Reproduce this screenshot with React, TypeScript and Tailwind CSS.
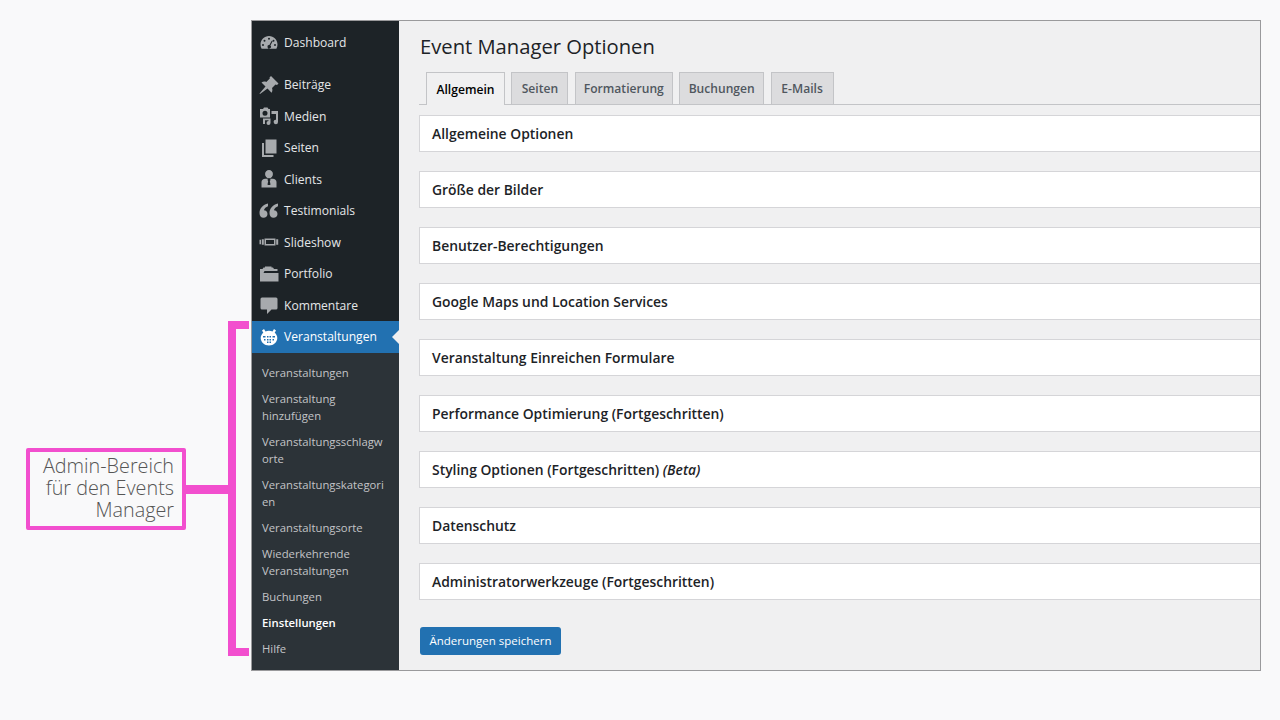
import type { ReactNode } from "react";

const Icon = ({ children, className = "text-[#a7aaad]" }: { children: ReactNode; className?: string }) => (
  <svg viewBox="0 0 20 20" fill="currentColor" className={`w-[20px] h-[20px] shrink-0 ${className}`}>
    {children}
  </svg>
);

const icons: Record<string, ReactNode> = {
  dashboard: (
    <path
      fillRule="evenodd"
      d="M10 3C5.300 3 1.500 6.800 1.500 11.500c0 1.600.4 3 1.100 4.300h14.800c.7-1.300 1.100-2.700 1.100-4.300C18.500 6.800 14.700 3 10 3zM10 4.700a1 1 0 1 1 0 2 1 1 0 0 1 0-2zM5.500 6.700a1 1 0 1 1 0 2 1 1 0 0 1 0-2zm9 0a1 1 0 1 1 0 2 1 1 0 0 1 0-2zM4 11a1 1 0 1 1 0 2 1 1 0 0 1 0-2zm12 0a1 1 0 1 1 0 2 1 1 0 0 1 0-2zm-3.300-3.200.9.500-2.200 4.300a1.700 1.700 0 1 1-1-.5z"
    />
  ),
  pin: (
    <path d="M12 1 19.500 8.500 18 10 16.500 9.500 13 13c.7 1.700.5 3.300-.5 4.800L8.500 13.500 1 19l-.5-.5L6.500 11.500 2.500 7.500c1.500-1 3.200-1.200 4.800-.5L10.800 3.500 10.500 2.500z" />
  ),
  media: (
    <path
      fillRule="evenodd"
      d="M1 3h3l1-1.500h3.500L9.500 3H11v8.500H1zm5 1.800a2.500 2.500 0 1 0 0 5 2.500 2.500 0 0 0 0-5zM12.500 5H19v11a2.200 2.200 0 1 1-2-2.200V8h-4.500zM4 12.500h7.500V17a2 2 0 1 1-2-2v-.8H6V18H4z"
    />
  ),
  pages: (
    <path d="M6.500 1.500h11v14h-11zM3 5h2v12h9.500v2H3z" />
  ),
  client: (
    <path
      fillRule="evenodd"
      d="M10 1a3.900 3.900 0 0 1 3.900 4.100A3.900 3.900 0 0 1 10 9.300a3.900 3.900 0 0 1-3.900-4.200A3.900 3.900 0 0 1 10 1zM2.500 18.500v-5.500c0-2 1.600-3.300 3.700-3.300H9l-.6 1.300.8 1-.7 3.500.5 .5h2l.5-.5-.7-3.500.8-1L11 9.700h2.800c2.100 0 3.700 1.300 3.700 3.300v5.500z"
    />
  ),
  quote: (
    <g>
      <path d="M9 2.500C4 3.500.5 7.500.5 12c0 3 1.600 4.800 4 4.800 2.300 0 4-1.700 4-3.900s-1.600-3.700-3.600-3.700c.5-1.700 2.100-3.200 4.100-3.900z" />
      <path d="M19 2.500c-5 1-8.500 5-8.500 9.500 0 3 1.600 4.800 4 4.800 2.300 0 4-1.700 4-3.900s-1.600-3.700-3.600-3.700c.5-1.700 2.100-3.200 4.100-3.900z" />
    </g>
  ),
  slides: (
    <path
      fillRule="evenodd"
      d="M5.500 6.500h11v7h-11zm1.500 1.400v4.200h8V7.900zM.5 7.800h1.500v4.400H.5zM2.800 7.300h2v5.400h-2zM17.200 7.300h2v5.400h-2z"
    />
  ),
  folder: (
    <path d="M1 8V5h2.500l1-1.500h1.500V2.500h6.500v1h1.500L15 5h3.500v2H5.500L4.500 9H19.500v8.500H1z" />
  ),
  comment: (
    <path d="M3 2.500h14A1.500 1.500 0 0 1 18.500 4v9a1.500 1.500 0 0 1-1.500 1.500h-4.500L8 19v-4.500H3A1.500 1.500 0 0 1 1.500 13V4A1.500 1.500 0 0 1 3 2.500z" />
  ),
  calendar: (
    <path
      fillRule="evenodd"
      d="M3 3.500 5 2l1.500 2.400A8 8 0 0 1 10 3.700c1.300 0 2.500.3 3.500.7L15 2l2 1.500-1.300 2.300c1.600 1.400 2.600 3.200 2.600 5.200 0 4-3.700 7.500-8.300 7.500S1.700 15 1.700 11c0-2 1-3.800 2.600-5.200zM4 9v1.500h2.500V9zm4 0v1.500h1.500V9zm2.500 0v1.500H12V9zM13.500 9v1.500H16V9zM5 12v1.500h1.500V12zm3 0v1.500h1.500V12zm2.500 0v1.500H12V12zm3 0v1.500H15V12zM8 14.500V16h1.500v-1.500zm2.500 0V16H12v-1.500z"
    />
  ),
};

const menu = [
  { label: "Beiträge", icon: "pin" },
  { label: "Medien", icon: "media" },
  { label: "Seiten", icon: "pages" },
  { label: "Clients", icon: "client" },
  { label: "Testimonials", icon: "quote" },
  { label: "Slideshow", icon: "slides" },
  { label: "Portfolio", icon: "folder" },
  { label: "Kommentare", icon: "comment" },
];

const submenu = [
  { label: "Veranstaltungen" },
  { label: "Veranstaltung hinzufügen" },
  { label: "Veranstaltungsschlagworte" },
  { label: "Veranstaltungskategorien" },
  { label: "Veranstaltungsorte" },
  { label: "Wiederkehrende Veranstaltungen" },
  { label: "Buchungen" },
  { label: "Einstellungen", active: true },
  { label: "Hilfe" },
];

const tabs = ["Seiten", "Formatierung", "Buchungen", "E-Mails"];
const tabWidths = ["w-[57px]", "w-[98px]", "w-[85px]", "w-[63px]"];

const sections: ReactNode[] = [
  "Allgemeine Optionen",
  "Größe der Bilder",
  "Benutzer-Berechtigungen",
  "Google Maps und Location Services",
  "Veranstaltung Einreichen Formulare",
  "Performance Optimierung (Fortgeschritten)",
  <>
    Styling Optionen (Fortgeschritten) <em>(Beta)</em>
  </>,
  "Datenschutz",
  "Administratorwerkzeuge (Fortgeschritten)",
];

export default function App() {
  return (
    <div className="relative w-[1280px] h-[720px] overflow-hidden bg-[#f9f9fa] pt-[20px] pl-[251px] font-['Open_Sans','Noto_Sans',sans-serif]">
      <div className="flex w-[1010px] h-[651px] border border-[#9a9a9c] bg-[#f0f0f1]">
        <aside className="w-[147px] shrink-0 flex flex-col bg-[#1d2327]">
          <div className="h-[44px] flex items-center pl-[7px] gap-[5px] text-[12.100px] text-[#e4e6e8] shrink-0">
            <Icon>{icons.dashboard}</Icon>
            <span>Dashboard</span>
          </div>
          <div className="h-[4px] shrink-0" />
          {menu.map((m) => (
            <div key={m.label} className="h-[31.500px] flex items-center pl-[7px] gap-[5px] text-[12.100px] text-[#e4e6e8] shrink-0">
              <Icon>{icons[m.icon]}</Icon>
              <span className="pt-[1px]">{m.label}</span>
            </div>
          ))}
          <div className="relative h-[32px] flex items-center pl-[7px] gap-[5px] bg-[#2271b1] text-[12.100px] text-white shrink-0">
            <Icon className="text-white">{icons.calendar}</Icon>
            <span className="pt-[1px]">Veranstaltungen</span>
            <span className="absolute right-0 top-[9px] border-y-[7px] border-r-[7px] border-y-transparent border-r-[#f0f0f1]" />
          </div>
          <ul className="flex-1 bg-[#2c3338] pt-[11px] text-[11.300px] leading-[17px] text-[#c3c4c7]">
            {submenu.map((s) => (
              <li
                key={s.label}
                className={`pl-[10px] pr-[10px] pb-[9px] [overflow-wrap:anywhere] ${s.active ? "font-semibold text-white" : ""}`}
              >
                {s.label}
              </li>
            ))}
          </ul>
        </aside>

        <main className="flex-1 min-w-0 pl-[20px] pt-[10px]">
          <h1 className="h-[31px] pl-[1px] text-[20.200px] leading-[31px] text-[#1d2327]">Event Manager Optionen</h1>
          <div className="mt-[10px] h-[33px] flex gap-[6.400px] pl-[7px] border-b border-[#c3c4c7] text-[12.100px] font-semibold">
            <div className="w-[79px] h-[33px] pt-[2px] flex items-center justify-center border border-b-0 border-[#c3c4c7] bg-[#f0f0f1] text-black">
              Allgemein
            </div>
            {tabs.map((t, i) => (
              <div
                key={t}
                className={`${tabWidths[i]} h-[32px] pt-[2px] flex items-center justify-center border border-b-0 border-[#c3c4c7] bg-[#dcdcde] text-[#50575e]`}
              >
                {t}
              </div>
            ))}
          </div>
          <div className="mt-[10px] flex flex-col gap-[19px]">
            {sections.map((s, i) => (
              <div
                key={i}
                className="h-[37px] pt-[2px] flex items-center pl-[12px] bg-white border border-r-0 border-[#d5d5d8] text-[13.900px] font-semibold text-[#1d2327]"
              >
                <span>{s}</span>
              </div>
            ))}
          </div>
          <button className="mt-[27px] ml-[1px] w-[141px] h-[28px] rounded-[3px] bg-[#2271b1] text-[11.500px] text-white">
            Änderungen speichern
          </button>
        </main>
      </div>

      {/* pink annotation */}
      <div className="absolute left-[26px] top-[448px] w-[160px] h-[82px] border-[4px] border-[#f24fce] rounded-[2px] pt-[3px] pr-[8px] text-right text-[19.800px] leading-[22px] font-light text-[#555]">
        Admin-Bereich für den Events Manager
      </div>
      <div className="absolute left-[186px] top-[485px] w-[44px] h-[9px] bg-[#f24fce]" />
      <div className="absolute left-[228px] top-[321px] w-[21px] h-[335px] border-y-[8px] border-l-[8px] border-[#f24fce]" />
    </div>
  );
}
